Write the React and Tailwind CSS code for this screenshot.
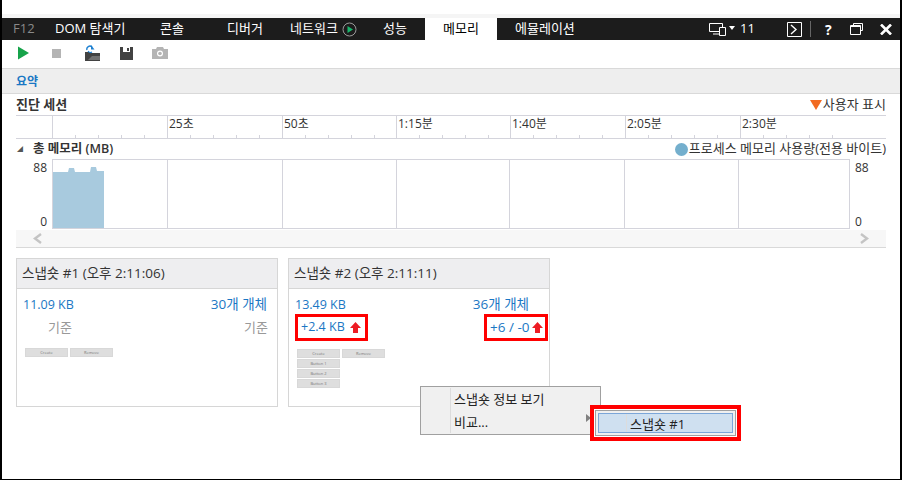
const FONT = "font-['Open_Sans','Noto_Sans_CJK_KR',sans-serif]";

const TABS = [
    { label: "DOM 탐색기", width: "w-[105px]" },
    { label: "콘솔", width: "w-[67px]" },
    { label: "디버거", width: "w-[63px]" },
];

const RULER = ["", "25초", "50초", "1:15분", "1:40분", "2:05분", "2:30분"];
const CELL_WIDTHS = ["w-[115px]", "w-[115px]", "w-[114px]", "w-[114px]", "w-[115px]", "w-[115px]", "w-[111px]"];

function PlayIcon() {
    return (
        <svg width="11" height="14" viewBox="0 0 11 14">
            <path d="M0 0.5 11 7 0 13.5z" fill="#16a34a" />
        </svg>
    );
}

function OpenIcon() {
    return (
        <svg width="15" height="16" viewBox="0 0 15 16">
            <path d="M0 7h5l1 1h9v8H0z" fill="#424242" />
            <path d="M2 5a3 3 0 0 1 5-3" fill="none" stroke="#1b7fd1" strokeWidth="1.4" />
            <path d="M6 0v4.500h3.500z" fill="#1b7fd1" />
            <path d="M7 7a3 3 0 0 1-4-1" fill="none" stroke="#1b7fd1" strokeWidth="1.2" />
            <path d="M3 15 7 11h8v4z" fill="#fff" opacity="0.25" />
        </svg>
    );
}

function SaveIcon() {
    return (
        <svg width="13" height="13" viewBox="0 0 13 13">
            <path d="M0 0h13v13H0z" fill="#424242" />
            <path d="M3 0h7v5H3z" fill="#fff" />
            <path d="M7 1h2v3H7z" fill="#424242" />
        </svg>
    );
}

function CameraIcon() {
    return (
        <svg width="16" height="12" viewBox="0 0 16 12">
            <path d="M0 2h4l1-2h6l1 2h4v10H0z" fill="#b4b4b4" />
            <circle cx="8" cy="6.500" r="3" fill="#fff" />
            <circle cx="8" cy="6.500" r="1.800" fill="#b4b4b4" />
        </svg>
    );
}

function UpArrow() {
    return (
        <svg width="11" height="11" viewBox="0 0 11 11">
            <path d="M5.500 0 11 6H8v5H3V6H0z" fill="#ed1c24" />
        </svg>
    );
}

function TopBar() {
    return (
        <div className="flex h-[22px] items-center bg-[#1c1c1c] text-[13px] text-white">
            <div className="w-[53px] pl-[11px] text-[#8a8a8a]">F12</div>
            {TABS.map((tab) => (
                <div key={tab.label} className={tab.width}>
                    {tab.label}
                </div>
            ))}
            <div className="flex w-[93px] items-center gap-[4px]">
                네트워크
                <svg width="15" height="15" viewBox="0 0 15 15">
                    <circle cx="7.500" cy="7.500" r="6.500" fill="none" stroke="#9a9a9a" />
                    <path d="M5.500 4 11 7.500 5.500 11z" fill="#19b56b" />
                </svg>
            </div>
            <div className="w-[42px]">성능</div>
            <div className="flex h-full w-[72px] items-center justify-center bg-white text-black">메모리</div>
            <div className="w-[212px] pl-[18px]">에뮬레이션</div>
            <svg width="17" height="13" viewBox="0 0 17 13" className="mr-[3px]">
                <path d="M.5.5h13v8H.5zM4 11h7" fill="none" stroke="#fff" />
                <path d="M10.500 4.500h6v8h-6z" fill="#1c1c1c" stroke="#fff" />
            </svg>
            <span className="mb-[2px] mr-[4px] h-0 w-0 border-x-[3px] border-t-[4px] border-x-transparent border-t-white" />
            <span className="ml-[1px]">11</span>
            <svg width="15" height="15" viewBox="0 0 15 15" className="ml-[32px]">
                <path d="M.5.5h14v14H.5z" fill="none" stroke="#fff" />
                <path d="M4 3l5 4.500L4 12" fill="none" stroke="#fff" strokeWidth="1.400" />
            </svg>
            <div className="ml-[8px] h-[16px] w-px bg-[#666]" />
            <span className="ml-[14px] text-[14px] font-bold">?</span>
            <svg width="13" height="12" viewBox="0 0 13 12" className="ml-[18px]">
                <path d="M3.500 2.500v-2h9v7h-2M.5 2.500h10v9H.5z" fill="none" stroke="#fff" />
                <path d="M.5 3.500h10" stroke="#fff" />
            </svg>
            <svg width="12" height="11" viewBox="0 0 12 11" className="ml-[17px]">
                <path d="M1 0.500 11 10.500M11 0.500 1 10.500" stroke="#fff" strokeWidth="2.600" />
            </svg>
        </div>
    );
}

function Toolbar() {
    return (
        <div className="flex h-[29px] items-center border-b border-[#d9d9d9] pb-[2px]">
            <div className="ml-[16px] flex w-[34px]"><PlayIcon /></div>
            <div className="h-[9px] w-[9px] bg-[#b4b4b4]" />
            <div className="ml-[24px]"><OpenIcon /></div>
            <div className="ml-[20px]"><SaveIcon /></div>
            <div className="ml-[19px]"><CameraIcon /></div>
        </div>
    );
}

function Ruler() {
    return (
        <div className="mx-[14px] flex h-[24px] border-y border-[#d4d4dc] pl-[36px] text-[12px] text-[#333]">
            {RULER.map((label, i) => (
                <div key={i} className={`flex flex-col justify-between border-l border-[#d4d4dc] ${CELL_WIDTHS[i]}`}>
                    <span className="pl-[1px] leading-[16px]">{label}</span>
                    <div className="flex">
                        {[0, 1, 2, 3].map((t) => (
                            <div key={t} className="h-[3px] w-[23px] border-r border-[#d4d4dc]" />
                        ))}
                    </div>
                </div>
            ))}
        </div>
    );
}

function MemoryChart() {
    return (
        <div className="mx-[14px]">
            <div className="flex h-[20px] items-center justify-between text-[12px] text-[#333]">
                <div className="flex items-center">
                    <span className="ml-[1px] w-[16px] text-[6px] text-[#555]">◢</span>
                    <span className="text-[12.5px] font-semibold">총 메모리 (MB)</span>
                </div>
                <div className="flex items-center gap-[1px] text-[13px]">
                    <span className="h-[13px] w-[13px] rounded-full bg-[#74afcd]" />
                    프로세스 메모리 사용량(전용 바이트)
                </div>
            </div>
            <div className="flex h-[70px] text-[12px] text-[#333]">
                <div className="flex h-[71px] w-[36px] flex-col justify-between pr-[5px] pt-[1px] text-right leading-[16px]">
                    <span>88</span>
                    <span>0</span>
                </div>
                <div className="relative flex w-[798px] border border-[#d4d4dc]">
                    {["w-[115px]", "w-[115px]", "w-[114px]", "w-[114px]", "w-[115px]", "w-[114px]", "w-[110px]"].map((w, i) => (
                        <div key={i} className={`${w} ${i < 6 ? "border-r border-[#d4d4dc]" : ""}`} />
                    ))}
                    <svg width="51" height="68" viewBox="0 0 51 68" className="absolute left-0 top-0">
                        <path d="M0 12h15l1-4h5l1 4h15l1-5h5l1 4h7v57H0z" fill="#a8cade" />
                    </svg>
                </div>
                <div className="flex h-[71px] w-[36px] flex-col justify-between pl-[5px] pt-[1px] leading-[16px]">
                    <span>88</span>
                    <span>0</span>
                </div>
            </div>
            <div className="mt-[1px] flex h-[18px] items-center justify-between border-b border-[#d9d9d9] bg-[#f7f7f7] px-[17px]">
                <svg width="9" height="11" viewBox="0 0 9 11"><path d="M8 1 2 5.500 8 10" fill="none" stroke="#c4c4c4" strokeWidth="2.400" /></svg>
                <svg width="9" height="11" viewBox="0 0 9 11"><path d="M1 1 7 5.500 1 10" fill="none" stroke="#c4c4c4" strokeWidth="2.400" /></svg>
            </div>
        </div>
    );
}

function ThumbButton({ label }) {
    return (
        <div className="flex h-[9px] w-[43px] items-center justify-center border border-[#d8d8d8] bg-[#dedede] text-[4px] leading-none text-[#777]">
            {label}
        </div>
    );
}

function SnapshotCard({ title, size, objects, right, children, thumb }) {
    return (
        <div className="h-[149px] w-[262px] border border-[#d6d6d6] text-[12.5px]">
            <div className="flex h-[30px] items-center border-b border-[#d6d6d6] bg-[#eeeef0] pl-[5px] text-[13.500px] text-[#333]">
                {title}
            </div>
            <div className={`flex items-center justify-between pl-[6px] pt-[7px] leading-[17px] text-[#1a77c4] ${right}`}>
                <span>{size}</span>
                <span className="text-[13.500px]">{objects}</span>
            </div>
            {children}
            {thumb}
        </div>
    );
}

function ContextMenu() {
    return (
        <div className="absolute left-[418px] top-[386px] flex h-[49px] w-[181px] border border-[#a0a0a0] bg-[#f0f0f0] text-[13px] text-[#222]">
            <div className="my-[1px] ml-[29px] w-px bg-[#dcdcdc]" />
            <div className="relative flex-1 pl-[3px] pt-px leading-[23px]">
                <div>스냅숏 정보 보기</div>
                <div>비교...</div>
                <span className="absolute right-[9px] top-[27px] h-0 w-0 border-y-[4px] border-l-[5px] border-y-transparent border-l-[#808080]" />
            </div>
        </div>
    );
}

function SubMenu() {
    return (
        <div className="absolute left-[588px] top-[405px] h-[36px] w-[151px] border-[4px] border-[#f00] bg-white p-px">
            <div className="h-full border border-[#a0a0a0] bg-[#f0f0f0] p-[2px]">
                <div className="flex h-full border border-[#7ba6d8] bg-[#cfe0f0] text-[13px] text-[#222]">
                    <div className="ml-[27px] w-px bg-[#dcdcdc]" />
                    <span className="pl-[3px] leading-[20px]">스냅숏 #1</span>
                </div>
            </div>
        </div>
    );
}

export default function App() {
    return (
        <div className={`relative h-[480px] w-[902px] overflow-hidden border-x-2 border-b border-black bg-white pt-[14px] ${FONT}`}>
            <div className="h-[4px] bg-[#f5f5f5]" />
            <TopBar />
            <Toolbar />
            <div className="flex h-[25px] items-center border-b border-[#d9d9d9] bg-[#eeeeee] pl-[14px] pt-[2px] text-[12px] font-semibold text-[#1a77c4]">
                요약
            </div>
            <div className="flex h-[21px] items-center justify-between px-[14px] text-[13px] text-[#333]">
                <span className="font-semibold">진단 세션</span>
                <span className="flex items-center gap-[1px]">
                    <span className="h-0 w-0 border-x-[6px] border-t-[10px] border-x-transparent border-t-[#f26a21]" />
                    사용자 표시
                </span>
            </div>
            <Ruler />
            <MemoryChart />
            <div className="ml-[14px] mt-[10px] flex gap-[10px]">
                <SnapshotCard
                    title="스냅숏 #1 (오후 2:11:06)"
                    size="11.09 KB"
                    objects="30개 개체"
                    right="pr-[10px]"
                    thumb={
                        <div className="ml-[8px] mt-[12px] flex gap-[2px]">
                            <ThumbButton label="Create" />
                            <ThumbButton label="Remove" />
                        </div>
                    }
                >
                    <div className="flex justify-between pl-[31px] pr-[9px] pt-[5px] text-[13px] leading-[18px] text-[#999]">
                        <span>기준</span>
                        <span>기준</span>
                    </div>
                </SnapshotCard>
                <SnapshotCard
                    title="스냅숏 #2 (오후 2:11:11)"
                    size="13.49 KB"
                    objects="36개 개체"
                    right="pr-[20px]"
                    thumb={
                        <div className="ml-[8px] mt-[8px] flex flex-col gap-[1px]">
                            <div className="flex gap-[2px]">
                                <ThumbButton label="Create" />
                                <ThumbButton label="Remove" />
                            </div>
                            <ThumbButton label="Button 1" />
                            <ThumbButton label="Button 2" />
                            <ThumbButton label="Button 3" />
                        </div>
                    }
                >
                    <div className="flex justify-between pl-[6px] pr-[1px] pt-[1px] text-[#1a77c4]">
                        <div className="flex h-[27px] w-[73px] items-center gap-[5px] border-[3px] border-[#f00] pl-[3px]">
                            +2.4 KB <UpArrow />
                        </div>
                        <div className="flex h-[27px] w-[64px] items-center gap-[3px] border-[3px] border-[#f00] pl-[3px] text-[13.500px]">
                            +6 / -0 <UpArrow />
                        </div>
                    </div>
                </SnapshotCard>
            </div>
            <ContextMenu />
            <SubMenu />
        </div>
    );
}
